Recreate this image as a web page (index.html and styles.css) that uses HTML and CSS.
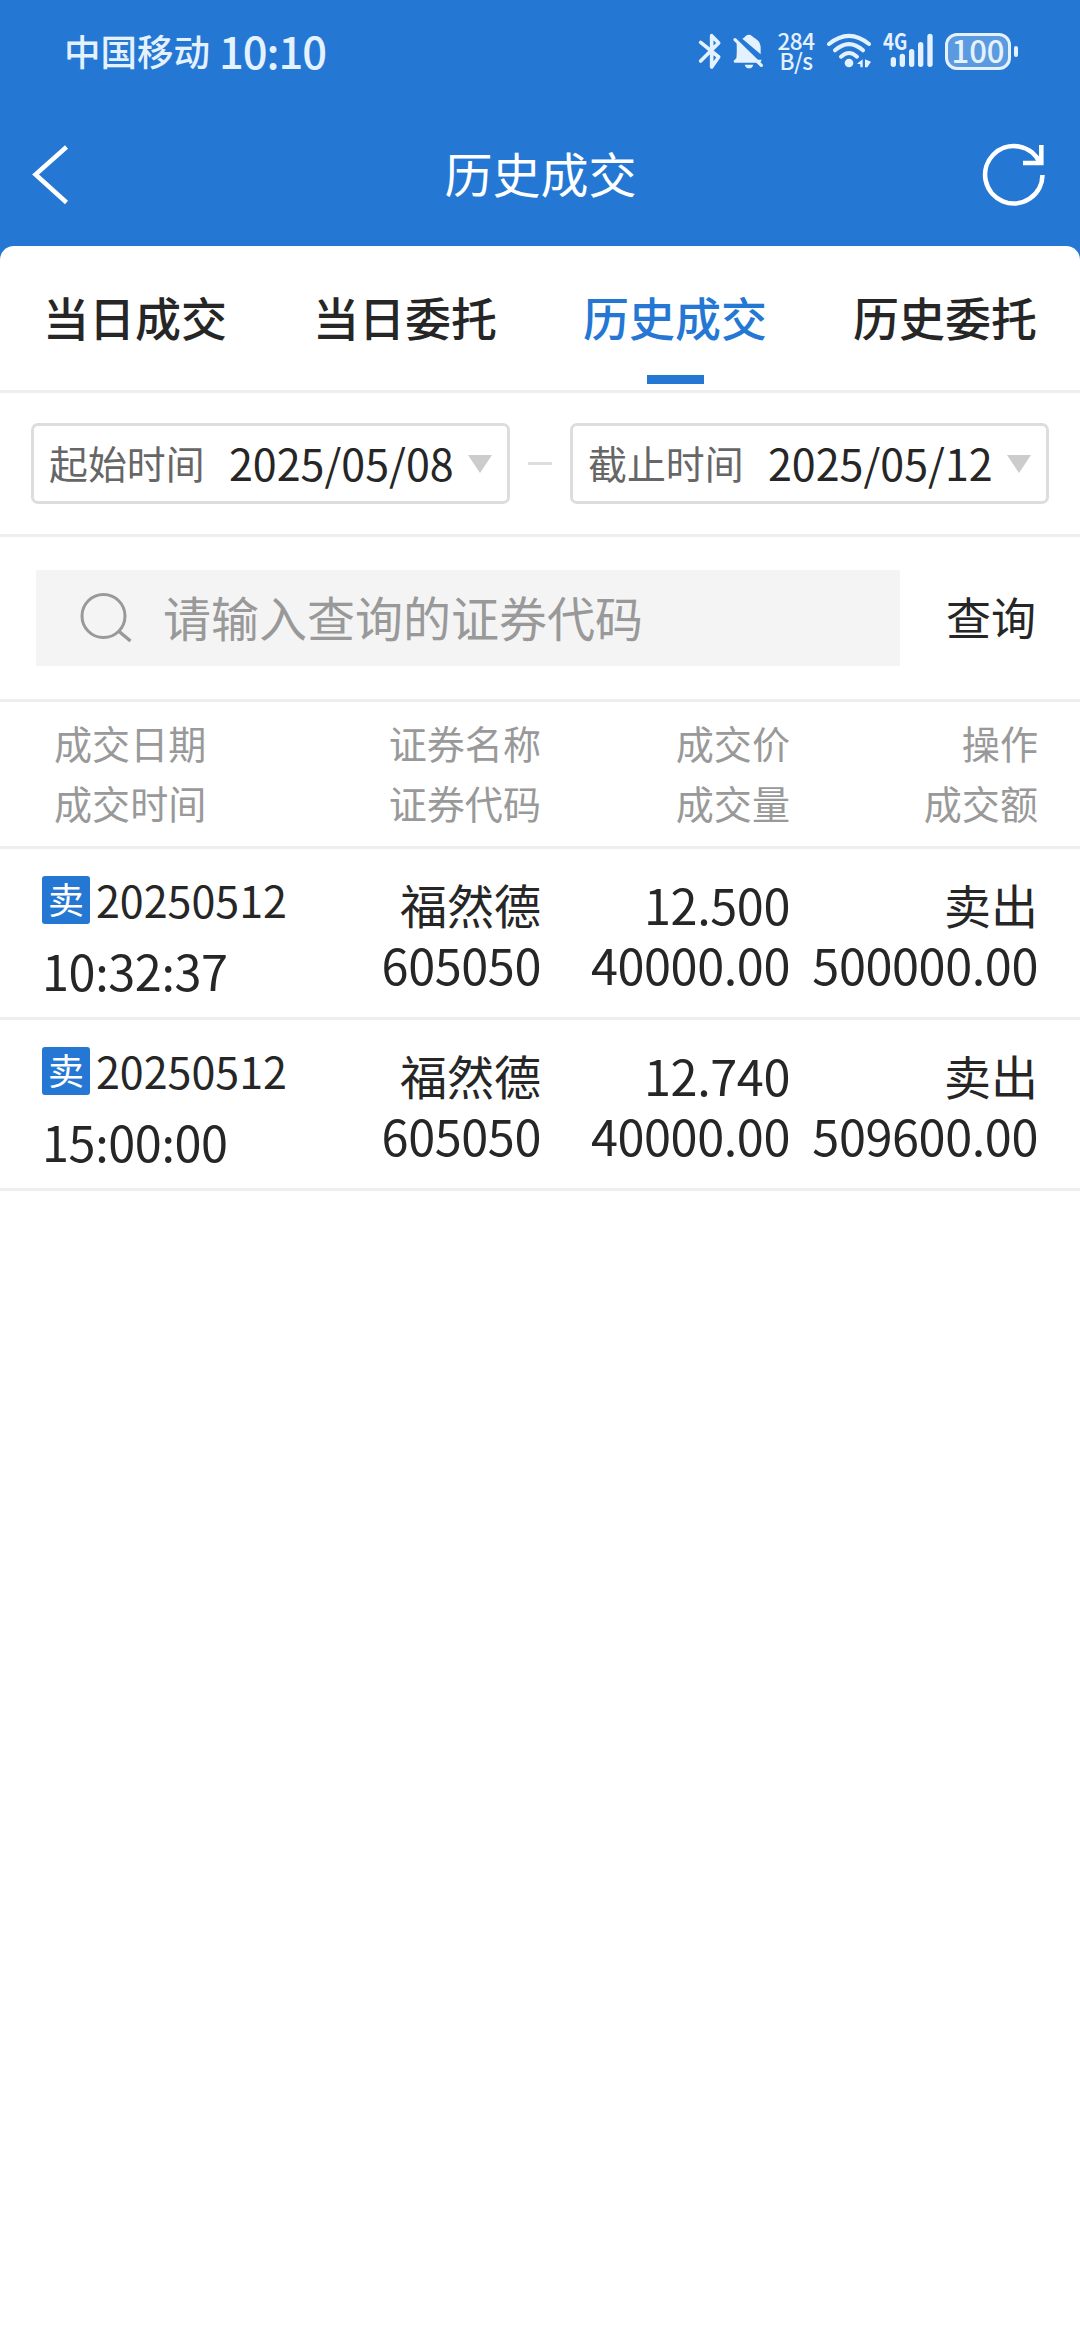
FILE: index.html
```html
<!DOCTYPE html>
<html lang="zh-CN">
<head>
  <meta charset="UTF-8">
  <title>历史成交</title>
  <link rel="stylesheet" href="styles.css">
</head>
<body>
  <div class="top">
    <div class="status">
      <span class="carrier">中国移动</span>
      <span class="clock">10:10</span>
      <div class="status-icons">
        <svg class="bluetooth" width="24" height="38" viewBox="54 66 72 114">
          <path d="M62 97L116 141L95 171V77L116 99L62 153" fill="none" stroke="#e4f1ff" stroke-width="11" stroke-linejoin="round" stroke-linecap="round"/>
        </svg>
        <svg class="bell" width="32" height="38" viewBox="156 66 96 114">
          <path d="M170 98L224 149H244V154L238 158H165Q160 158 161 152L169 145Q171 130 170 98Z" fill="#e4f1ff"/>
          <path d="M187 86Q194 83 197 78Q207 70 216 78Q219 82 227 86Q240 94 242 110V133Z" fill="#e4f1ff"/>
          <path d="M194 164H220Q217 175 207 175Q197 175 194 164Z" fill="#e4f1ff"/>
          <path d="M165 89L244 166" stroke="#e4f1ff" stroke-width="10" stroke-linecap="round"/>
        </svg>
        <div class="speed"><span>284</span><span>B/s</span></div>
        <svg class="wifi" width="46" height="38" viewBox="438 66 138 114">
          <g fill="none" stroke="#e4f1ff" stroke-width="12" stroke-linecap="round">
            <path d="M447 102Q507 53 567 102"/>
            <path d="M465 121Q507 84 549 121"/>
            <path d="M483 140Q507 118 531 140"/>
          </g>
          <circle cx="507" cy="159" r="13" fill="#e4f1ff"/>
          <path d="M531 161L548 148V172H541V163ZM555 148L573 155L562 172H555Z" fill="#e4f1ff"/>
        </svg>
        <svg class="signal" width="52" height="38" viewBox="606 66 156 114">
          <text x="609" y="121" class="net" textLength="73" lengthAdjust="spacingAndGlyphs">4G</text>
          <g stroke="#e4f1ff" stroke-width="16" stroke-linecap="round">
            <path d="M640 149V163M667 139V163M695 125V163M722 104V163M750 79V163"/>
          </g>
        </svg>
        <div class="battery">100</div>
        <i class="battery-tip"></i>
      </div>
    </div>
    <div class="header">
      <svg width="40" height="64" viewBox="30 142 40 64">
        <path d="M66.500 147L35.500 174.500L66.500 202.500" fill="none" stroke="#fff" stroke-width="4.500"/>
      </svg>
      <h1>历史成交</h1>
      <svg width="66" height="66" viewBox="981 142 66 66">
        <g fill="none" stroke="#fff" stroke-width="4.600">
          <path d="M1042.500 176A28.700 28.700 0 1 1 1040 164"/>
          <path d="M1023 164H1041.300V146"/>
        </g>
      </svg>
    </div>
  </div>

  <div class="panel">
    <div class="tabs">
      <div class="tab">当日成交</div>
      <div class="tab">当日委托</div>
      <div class="tab active">历史成交</div>
      <div class="tab">历史委托</div>
    </div>

    <div class="dates">
      <div class="date"><span class="label">起始时间</span><span class="value">2025/05/08</span><i class="arrow"></i></div>
      <i class="dash"></i>
      <div class="date"><span class="label">截止时间</span><span class="value">2025/05/12</span><i class="arrow"></i></div>
    </div>

    <div class="search">
      <div class="search-box">
        <svg width="54" height="54" viewBox="0 0 54 54">
          <ellipse cx="24.500" cy="25" rx="21.500" ry="21.500" fill="none" stroke="#999" stroke-width="3"/>
          <path d="M39.500 40L51.500 50" stroke="#999" stroke-width="3.500"/>
        </svg>
        <span>请输入查询的证券代码</span>
      </div>
      <div class="search-btn">查询</div>
    </div>

    <div class="row head">
      <div><p>成交日期</p><p>成交时间</p></div>
      <div><p>证券名称</p><p>证券代码</p></div>
      <div><p>成交价</p><p>成交量</p></div>
      <div><p>操作</p><p>成交额</p></div>
    </div>
    <div class="row">
      <div class="when"><p class="day"><b>卖</b>20250512</p><p class="time">10:32:37</p></div>
      <div><p class="name">福然德</p><p>605050</p></div>
      <div><p>12.500</p><p>40000.00</p></div>
      <div><p class="name">卖出</p><p>500000.00</p></div>
    </div>
    <div class="row">
      <div class="when"><p class="day"><b>卖</b>20250512</p><p class="time">15:00:00</p></div>
      <div><p class="name">福然德</p><p>605050</p></div>
      <div><p>12.740</p><p>40000.00</p></div>
      <div><p class="name">卖出</p><p>509600.00</p></div>
    </div>
  </div>
</body>
</html>
```
FILE: styles.css
```css
* { box-sizing: border-box; }
body { margin: 0; background: #fff; color: #262626; font-family: "Noto Sans CJK SC", sans-serif; }
p, h1 { margin: 0; font-weight: 400; }
svg, i { display: block; flex: none; }

.top { height: 260px; background: #2577d4; color: #fff; }
.status { display: flex; align-items: center; height: 102px; padding-left: 64px; color: #e4f1ff; white-space: nowrap; }
.carrier { width: 155px; font-size: 36.5px; font-weight: 500; line-height: 50px; }
.clock { font-size: 43.5px; font-weight: 500; letter-spacing: -1px; line-height: 50px; }
.status-icons { display: flex; align-items: center; margin-left: auto; padding-right: 62px; }
.bell { margin-left: 10px; }
.speed { display: flex; flex-direction: column; width: 38px; margin-left: 13px; padding-bottom: 2px; text-align: center; font-size: 22.5px; font-weight: 500; line-height: 20px; letter-spacing: -0.5px; }
.wifi { margin-left: 11px; }
.signal { margin-left: 10px; overflow: visible; }
.net { font-size: 66px; font-weight: 700; fill: #e4f1ff; }
.battery { width: 66px; height: 37px; margin-left: 11px; border: 3px solid #e4f1ff; border-radius: 12px; background: #5c9ae0; font-size: 31px; font-weight: 500; line-height: 28px; text-align: center; }
.battery-tip { width: 4px; height: 11px; margin-left: 3px; border-radius: 2px; background: #e4f1ff; }

.header { display: flex; align-items: center; justify-content: space-between; height: 144px; padding: 0 33px 0 30px; }
.header h1 { padding: 0 0 5px 30px; font-size: 48px; line-height: 60px; }

.panel { margin-top: -14px; background: #fff; border-radius: 14px 14px 0 0; }
.tabs { display: flex; height: 147px; border-bottom: 3px solid #eee; }
.tab { display: flex; flex-direction: column; align-items: center; flex: 1; padding-top: 35px; font-size: 46px; font-weight: 500; line-height: 70px; }
.tab.active { color: #2577d4; }
.tab.active::after { content: ""; width: 57px; height: 9px; margin-top: 24px; background: #2577d4; }

.dates { display: flex; align-items: center; justify-content: space-between; height: 144px; padding: 0 31px; border-bottom: 3px solid #eee; }
.date { display: flex; align-items: center; width: 479px; height: 81px; padding: 0 15px; border: 3px solid #ddd; border-radius: 7px; white-space: nowrap; }
.label { width: 180px; padding-bottom: 3px; color: #666; font-size: 38.9px; }
.value { padding-bottom: 3px; font-size: 43px; }
.arrow { margin-left: auto; border: 12px solid transparent; border-top: 18px solid #ccc; border-bottom: 0; }
.dash { width: 24px; height: 3px; background: #ddd; }

.search { display: flex; align-items: center; height: 165px; padding-left: 36px; border-bottom: 3px solid #eee; }
.search-box { display: flex; align-items: center; width: 864px; height: 96px; padding-left: 43px; background: #f4f4f4; color: #999; font-size: 48px; }
.search-box span { margin-left: 30px; padding-bottom: 5px; }
.search-btn { margin-left: 46px; padding-bottom: 3px; font-size: 45px; }

.row { display: grid; grid-template-columns: 267px 274px 249px 248px; height: 171px; padding-top: 25px; border-bottom: 3px solid #eee; font-size: 48.6px; line-height: 60px; letter-spacing: -0.4px; text-align: right; white-space: nowrap; }
.row p { height: 60px; }
.row .name { font-size: 47px; letter-spacing: 0; }
.row.head { height: 147px; padding-top: 11px; color: #999; font-size: 38.1px; letter-spacing: 0; }
.row.head div:first-child { padding-left: 54px; text-align: left; }
.when { padding-left: 42px; text-align: left; }
.day { display: flex; margin-top: -5px; font-size: 43px; letter-spacing: 0; }
.day b { flex: none; width: 48px; height: 48px; margin: 7px 6px 0 0; border-radius: 3px; background: #2577d4; color: #fff; font-size: 36px; font-weight: 400; line-height: 45px; text-align: center; }
.time { padding-top: 11px; }
```
